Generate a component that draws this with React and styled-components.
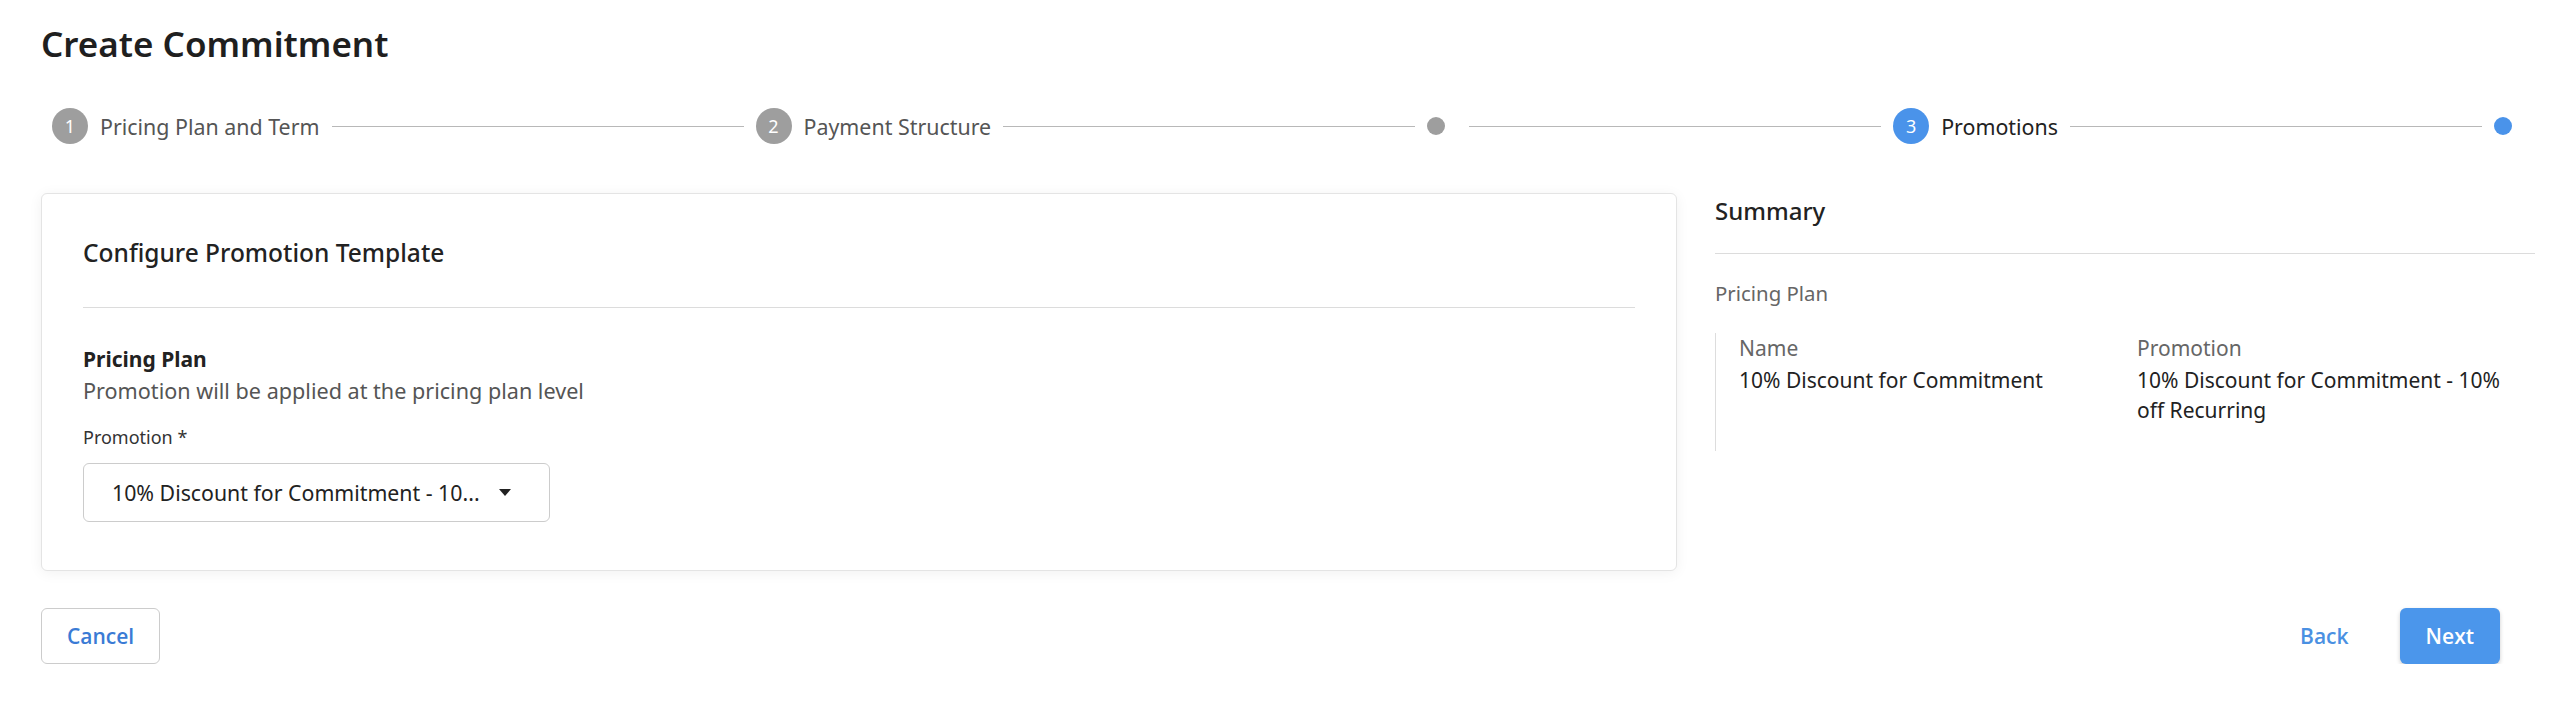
import React from 'react';
import styled, { createGlobalStyle } from 'styled-components';

const GlobalStyle = createGlobalStyle`
  body {
    margin: 0;
    background: #ffffff;
    font-family: "Noto Sans", "Open Sans", sans-serif;
    color: #222222;
  }
  * { box-sizing: border-box; }
`;

// Page layout
const Page = styled.div`
  padding: 21px 21px 0 41px;
`;

const Title = styled.h1`
  margin: 0;
  font-size: 35px;
  font-weight: 600;
  line-height: 45px;
  color: #1f1f1f;
`;

// Stepper
const Stepper = styled.div`
  display: flex;
  align-items: center;
  gap: 12px;
  height: 36px;
  margin-top: 42px;
  padding: 0 23px 0 11px;
`;

const StepCircle = styled.div`
  flex: 0 0 auto;
  width: 36px;
  height: 36px;
  border-radius: 50%;
  background: ${(props) => (props.active ? '#4a93ea' : '#9e9e9e')};
  color: #ffffff;
  font-size: 18px;
  display: flex;
  align-items: center;
  justify-content: center;
`;

const StepDot = styled.div`
  flex: 0 0 auto;
  width: 18px;
  height: 18px;
  border-radius: 50%;
  background: ${(props) => (props.active ? '#4a93ea' : '#9e9e9e')};
`;

const StepLabel = styled.span`
  flex: 0 0 auto;
  font-size: 21.4px;
  color: ${(props) => (props.active ? '#222222' : '#555555')};
  white-space: nowrap;
`;

const StepLine = styled.div`
  flex: 1;
  height: 1px;
  background: #b8b8b8;
`;

// Content
const Content = styled.div`
  display: flex;
  align-items: flex-start;
  gap: 38px;
  margin-top: 49px;
`;

const Card = styled.div`
  flex: 0 0 1636px;
  background: #ffffff;
  border: 1px solid #e4e4e4;
  border-radius: 6px;
  box-shadow: 0 2px 14px rgba(0, 0, 0, 0.06);
  padding: 42px 41px 48px;
`;

const CardTitle = styled.h2`
  margin: 0;
  font-size: 24.5px;
  font-weight: 500;
  line-height: 33px;
  color: #222222;
`;

const Divider = styled.div`
  height: 1px;
  background: #dcdcdc;
  margin: ${(props) => props.$margin || '38px 0 0'};
`;

const SectionTitle = styled.div`
  margin-top: 36px;
  font-size: 21px;
  font-weight: 700;
  line-height: 31.5px;
  color: #222222;
`;

const SectionText = styled.div`
  font-size: 21.6px;
  line-height: 30px;
  color: #555555;
`;

const FieldLabel = styled.div`
  margin-top: 18px;
  font-size: 18px;
  line-height: 27px;
  color: #333333;
`;

const Select = styled.div`
  margin-top: 12px;
  width: 467px;
  height: 59px;
  border: 1px solid #cccccc;
  border-radius: 6px;
  padding-left: 28px;
  display: flex;
  align-items: center;
  gap: 19px;
  font-size: 21.3px;
  color: #222222;
`;

const Caret = styled.span`
  width: 0;
  height: 0;
  border-left: 6px solid transparent;
  border-right: 6px solid transparent;
  border-top: 7px solid #222222;
`;

// Summary
const Summary = styled.div`
  flex: 1;
  min-width: 0;
`;

const SummaryTitle = styled.div`
  font-size: 24px;
  font-weight: 500;
  line-height: 36px;
  color: #222222;
`;

const SummaryGroup = styled.div`
  margin-top: 24px;
  font-size: 20.4px;
  line-height: 30px;
  color: #666666;
`;

const SummaryBlock = styled.div`
  margin-top: 25px;
  border-left: 1px solid #dddddd;
  padding: 0 0 26px 23px;
  display: grid;
  grid-template-columns: 1fr 1fr;
`;

const SummaryCell = styled.div`
  padding-right: 16px;
`;

const SummaryKey = styled.div`
  font-size: 21px;
  line-height: 30px;
  color: #666666;
  margin-bottom: 2px;
`;

const SummaryValue = styled.div`
  font-size: 21px;
  line-height: 30px;
  color: #222222;
`;

// Footer
const Footer = styled.div`
  display: flex;
  justify-content: space-between;
  align-items: center;
  margin-top: 37px;
  padding-right: 35px;
`;

const Actions = styled.div`
  display: flex;
  gap: 25px;
`;

const Button = styled.button`
  height: 56px;
  padding: 0 25px;
  border-radius: 6px;
  font-family: "Open Sans", sans-serif;
  font-size: 21px;
  font-weight: 600;
  cursor: pointer;
  border: 1px solid ${(props) => (props.outline ? '#cccccc' : 'transparent')};
  background: ${(props) => (props.primary ? '#4b96eb' : '#ffffff')};
  color: ${(props) => (props.primary ? '#ffffff' : props.outline ? '#3a7bd5' : '#4a90e2')};
  box-shadow: ${(props) => (props.primary ? '0 2px 4px rgba(0, 0, 0, 0.2)' : 'none')};
`;

const steps = [
  { type: 'circle', num: 1, label: 'Pricing Plan and Term' },
  { type: 'circle', num: 2, label: 'Payment Structure' },
  { type: 'dot' },
  { type: 'circle', num: 3, label: 'Promotions', active: true },
];

const App = () => (
  <>
    <GlobalStyle />
    <Page>
      <Title>Create Commitment</Title>

      <Stepper>
        {steps.map((step, i) => (
          <React.Fragment key={i}>
            {step.type === 'circle' ? (
              <StepCircle active={step.active}>{step.num}</StepCircle>
            ) : (
              <StepDot />
            )}
            <StepLabel active={step.active}>{step.label || ''}</StepLabel>
            <StepLine />
          </React.Fragment>
        ))}
        <StepDot active />
      </Stepper>

      <Content>
        <Card>
          <CardTitle>Configure Promotion Template</CardTitle>
          <Divider />
          <SectionTitle>Pricing Plan</SectionTitle>
          <SectionText>Promotion will be applied at the pricing plan level</SectionText>
          <FieldLabel>Promotion *</FieldLabel>
          <Select>
            <span>10% Discount for Commitment - 10...</span>
            <Caret />
          </Select>
        </Card>

        <Summary>
          <SummaryTitle>Summary</SummaryTitle>
          <Divider $margin="24px 0 0" />
          <SummaryGroup>Pricing Plan</SummaryGroup>
          <SummaryBlock>
            <SummaryCell>
              <SummaryKey>Name</SummaryKey>
              <SummaryValue>10% Discount for Commitment</SummaryValue>
            </SummaryCell>
            <SummaryCell>
              <SummaryKey>Promotion</SummaryKey>
              <SummaryValue>10% Discount for Commitment - 10% off Recurring</SummaryValue>
            </SummaryCell>
          </SummaryBlock>
        </Summary>
      </Content>

      <Footer>
        <Button outline>Cancel</Button>
        <Actions>
          <Button>Back</Button>
          <Button primary>Next</Button>
        </Actions>
      </Footer>
    </Page>
  </>
);

export default App;
